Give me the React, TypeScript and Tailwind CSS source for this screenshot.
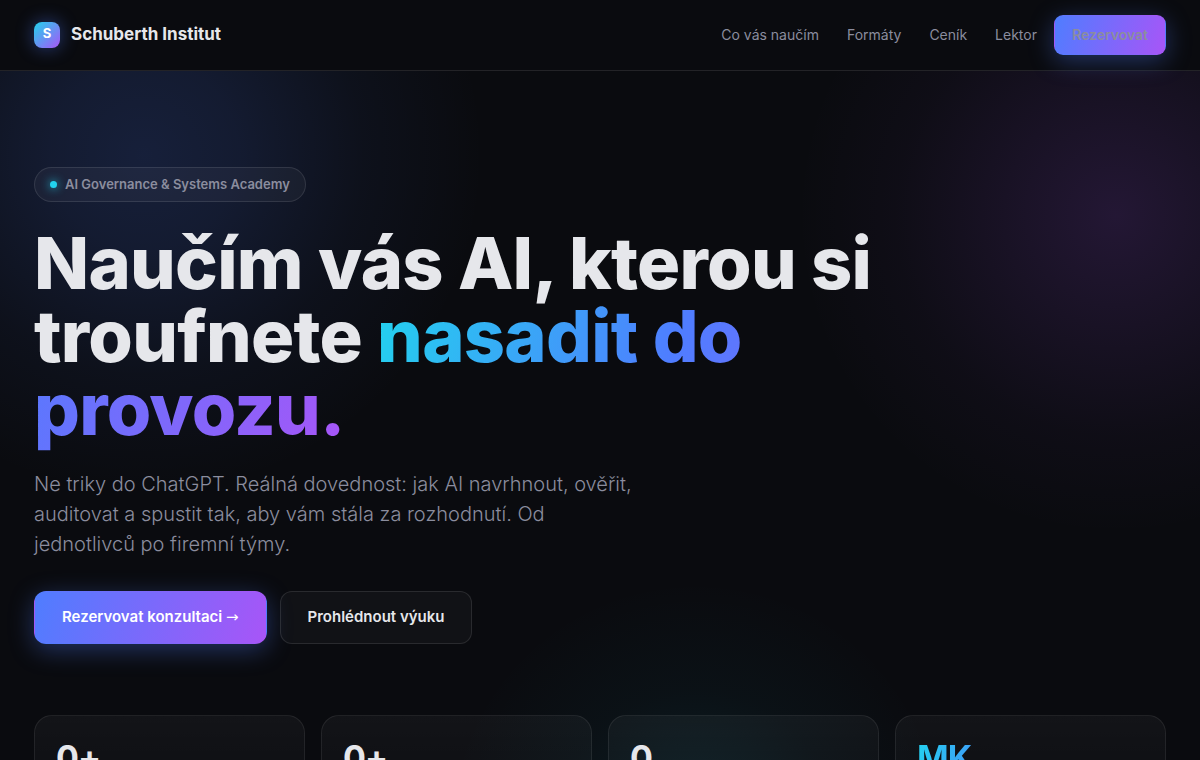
const NAV_LINKS = [
    { href: '#vyuka', label: 'Co vás naučím' },
    { href: '#formaty', label: 'Formáty' },
    { href: '#cenik', label: 'Ceník' },
    { href: '#lektor', label: 'Lektor' },
];

const STATS = [
    { id: 'hours', value: '0+' },
    { id: 'students', value: '0+' },
    { id: 'formats', value: '0' },
    { id: 'lecturer', value: 'MK', accent: true },
];

const Header = () => (
    <header className="border-b border-white/10 bg-[#0a0b0f]">
        <div className="mx-auto flex h-[70px] max-w-[1200px] items-center justify-between px-[34px]">
            <a href="#top" className="flex items-center gap-[11px]">
                <span className="flex size-[26px] items-center justify-center rounded-lg bg-[linear-gradient(135deg,#22d3ee,#a855f7)] pb-0.5 text-[13px] font-bold text-white shadow-[0_0_18px_rgba(79,125,255,0.45)]">
                    S
                </span>
                <span className="text-[17px] font-bold">Schuberth Institut</span>
            </a>

            <nav className="flex items-center text-sm text-[#8b8d9e]">
                {NAV_LINKS.map((link) => (
                    <a key={link.href} href={link.href} className="px-[14px] hover:text-white">
                        {link.label}
                    </a>
                ))}
                <a
                    href="#rezervace"
                    className="ml-[3px] flex h-10 items-center rounded-[9px] border border-transparent bg-[linear-gradient(110deg,#4f7dff,#a855f7)] px-[17px] font-semibold shadow-[0_6px_24px_rgba(79,125,255,0.35)]"
                >
                    Rezervovat
                </a>
            </nav>
        </div>
    </header>
);

const Hero = () => (
    <section className="flex flex-col items-start pt-24">
        <div className="flex h-[35px] items-center gap-2 rounded-full border border-white/10 bg-white/[0.04] px-[15px] text-[13px] font-semibold text-[#8b8d9e]">
            <span className="size-[7px] rounded-full bg-[#22d3ee] shadow-[0_0_10px_#22d3ee]" />
            AI Governance &amp; Systems Academy
        </div>

        <h1 className="mt-6 max-w-[900px] text-[72px] leading-[73px] font-extrabold tracking-[-0.01em]">
            Naučím vás AI, kterou si troufnete{' '}
            <span className="bg-[linear-gradient(110deg,#22d3ee,#4f7dff_45%,#a855f7)] bg-clip-text text-transparent">
                nasadit do provozu.
            </span>
        </h1>

        <p className="mt-6 max-w-[610px] text-xl leading-[30px] font-light text-[#8b8d9e]">
            Ne triky do ChatGPT. Reálná dovednost: jak AI navrhnout, ověřit, auditovat a spustit tak,
            aby vám stála za rozhodnutí. Od jednotlivců po firemní týmy.
        </p>

        <div className="mt-8 flex gap-[13px] text-[15px] font-semibold">
            <button
                type="button"
                className="h-[53px] rounded-xl border border-transparent bg-[linear-gradient(110deg,#4f7dff,#a855f7)] px-[27px] text-white shadow-[0_6px_24px_rgba(79,125,255,0.35)]"
            >
                Rezervovat konzultaci <span className="font-['DejaVu_Sans',sans-serif] leading-none font-normal">→</span>
            </button>
            <button
                type="button"
                className="h-[53px] rounded-xl border border-white/10 bg-white/[0.03] px-[27px]"
            >
                Prohlédnout výuku
            </button>
        </div>
    </section>
);

const Stats = () => (
    <section className="mt-[71px] grid grid-cols-4 gap-4">
        {STATS.map((stat) => (
            <div
                key={stat.id}
                className="rounded-[18px] border border-white/[0.08] bg-[linear-gradient(180deg,rgba(255,255,255,0.04),rgba(255,255,255,0.015))] px-[21px] py-[22px]"
            >
                <span
                    className={
                        stat.accent
                            ? 'bg-[linear-gradient(110deg,#22d3ee,#4f7dff_150%)] bg-clip-text text-[34px] leading-10 font-bold tracking-tight text-transparent'
                            : 'text-[34px] leading-10 font-bold tracking-tight'
                    }
                >
                    {stat.value}
                </span>
            </div>
        ))}
    </section>
);

const App = () => {
    return (
        <div
            id="top"
            className="h-screen overflow-hidden bg-[#0a0b0f] bg-[radial-gradient(circle_at_12%_155px,rgba(79,125,255,0.18),rgba(79,125,255,0.14)_95px,rgba(79,125,255,0.05)_220px,transparent_340px),radial-gradient(circle_at_93%_215px,rgba(168,85,247,0.16),rgba(168,85,247,0.09)_120px,rgba(168,85,247,0.03)_220px,transparent_320px),radial-gradient(circle_at_58%_830px,rgba(34,211,238,0.11),rgba(34,211,238,0.03)_140px,transparent_250px)] font-['Inter',sans-serif] text-[#e6e7eb]"
        >
            <Header />
            <main className="mx-auto max-w-[1200px] px-[34px]">
                <Hero />
                <Stats />
            </main>
        </div>
    );
};

export default App;
